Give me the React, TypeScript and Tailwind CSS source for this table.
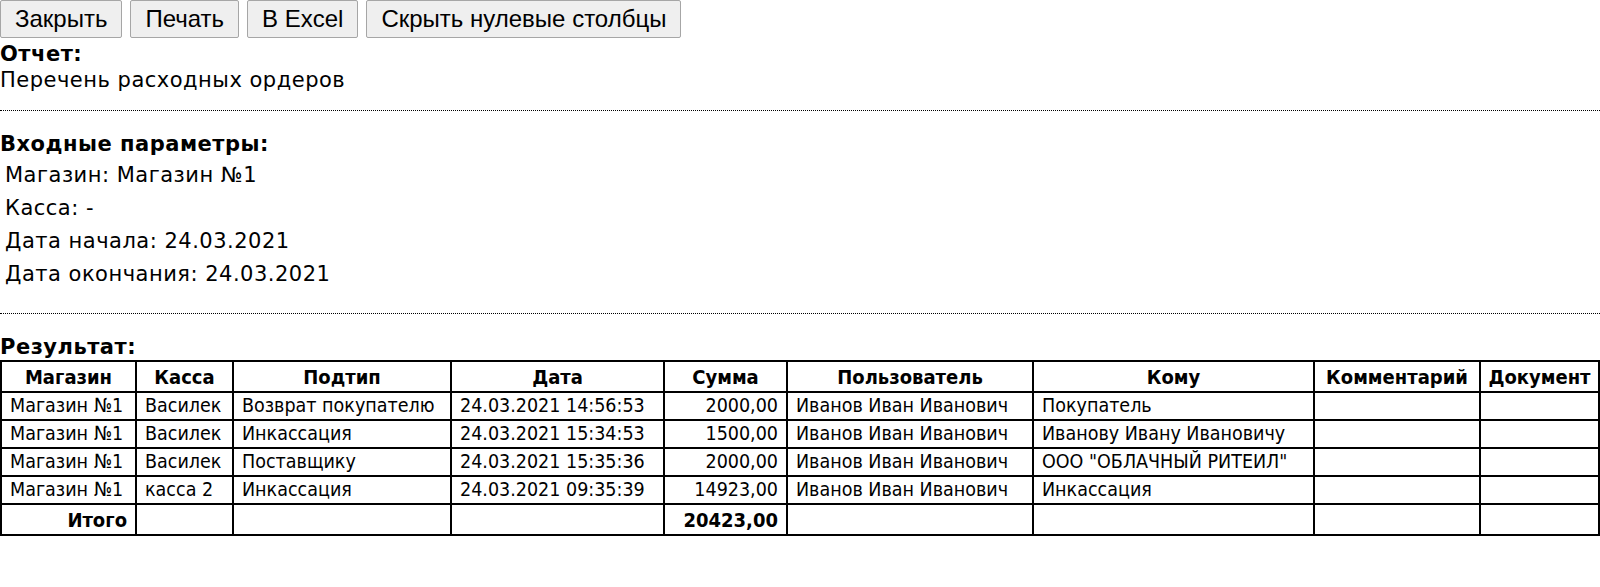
const rows = [
    ['Магазин №1', 'Василек', 'Возврат покупателю', '24.03.2021 14:56:53', '2000,00', 'Иванов Иван Иванович', 'Покупатель'],
    ['Магазин №1', 'Василек', 'Инкассация', '24.03.2021 15:34:53', '1500,00', 'Иванов Иван Иванович', 'Иванову Ивану Ивановичу'],
    ['Магазин №1', 'Василек', 'Поставщику', '24.03.2021 15:35:36', '2000,00', 'Иванов Иван Иванович', 'ООО "ОБЛАЧНЫЙ РИТЕИЛ"'],
    ['Магазин №1', 'касса 2', 'Инкассация', '24.03.2021 09:35:39', '14923,00', 'Иванов Иван Иванович', 'Инкассация'],
];

const headers = ['Магазин', 'Касса', 'Подтип', 'Дата', 'Сумма', 'Пользователь', 'Кому', 'Комментарий', 'Документ'];
const widths = ['w-[135px]', 'w-[97px]', 'w-[218px]', 'w-[213px]', 'w-[123px]', 'w-[246px]', 'w-[281px]', 'w-[166px]', 'w-[119px]'];

const params = ['Магазин: Магазин №1', 'Касса: -', 'Дата начала: 24.03.2021', 'Дата окончания: 24.03.2021'];

function Btn({ children }: { children: string }) {
    return (
        <button className="h-[38px] px-[14px] bg-[#efefef] border border-[#a6a6a6] rounded-[2px] font-['Liberation_Sans',Arial,sans-serif] text-[24px] leading-[28px] tracking-normal text-black">
            {children}
        </button>
    );
}

// жирный шрифт шапки и итогов
const bold = "text-[20px] font-bold";

export default function App() {
    return (
        <div className="bg-white min-h-screen font-['DejaVu_Sans',Verdana,sans-serif] text-[21px] leading-[24px] tracking-[0.5px] text-black">
            <div className="flex gap-[8px]">
                <Btn>Закрыть</Btn>
                <Btn>Печать</Btn>
                <Btn>В Excel</Btn>
                <Btn>Скрыть нулевые столбцы</Btn>
            </div>

            <div className="mt-[4px] font-bold">Отчет:</div>
            <div className="mt-[2px]">Перечень расходных ордеров</div>

            <div className="mt-[18px] border-t border-dotted border-black" />

            <div className="mt-[21px] font-bold">Входные параметры:</div>
            <div className="mt-[3px]">
                {params.map((p) => (
                    <div key={p} className="h-[33px] py-[4px] pl-[5px]">{p}</div>
                ))}
            </div>

            <div className="mt-[22px] border-t border-dotted border-black" />

            <div className="mt-[21px] font-bold">Результат:</div>
            <table className="mt-[1px] w-full border-collapse font-['DejaVu_Sans_Condensed','DejaVu_Sans',Tahoma,sans-serif] text-[19.5px] leading-[22px] tracking-normal">
                <thead>
                    <tr className="h-[31px]">
                        {headers.map((h, i) => (
                            <th key={h} className={`${widths[i]} ${bold} border-2 border-black px-[6px] text-center whitespace-nowrap`}>{h}</th>
                        ))}
                    </tr>
                </thead>
                <tbody>
                    {rows.map((r, ri) => (
                        <tr key={ri} className="h-[28px]">
                            {r.map((c, ci) => (
                                <td key={ci} className={`border-2 border-black px-[8px] whitespace-nowrap ${ci === 4 ? 'text-right' : 'text-left'}`}>{c}</td>
                            ))}
                            <td className="border-2 border-black" />
                            <td className="border-2 border-black" />
                        </tr>
                    ))}
                    <tr className="h-[31px]">
                        <td className={`${bold} border-2 border-black px-[8px] text-right`}>Итого</td>
                        <td className="border-2 border-black" />
                        <td className="border-2 border-black" />
                        <td className="border-2 border-black" />
                        <td className={`${bold} border-2 border-black px-[8px] text-right`}>20423,00</td>
                        <td className="border-2 border-black" />
                        <td className="border-2 border-black" />
                        <td className="border-2 border-black" />
                        <td className="border-2 border-black" />
                    </tr>
                </tbody>
            </table>
        </div>
    );
}
